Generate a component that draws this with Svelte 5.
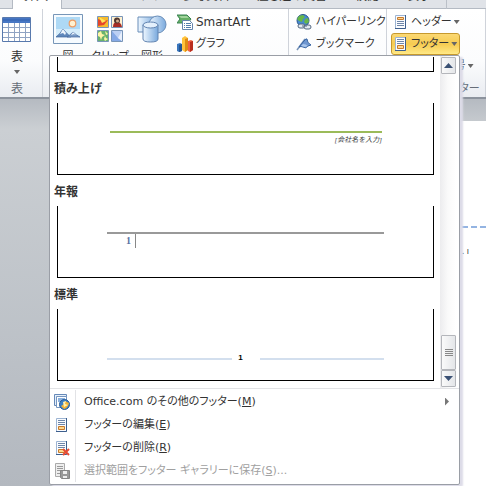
<script lang="ts">
  const tabs = ['挿入', 'ページ レイアウト', '参考資料', '差し込み文書', '校閲', '表示'];
  const actions = [
    { icon: 'office', label: 'Office.com のその他のフッター', key: 'M', tail: '', more: true, disabled: false },
    { icon: 'edit', label: 'フッターの編集', key: 'E', tail: '', more: false, disabled: false },
    { icon: 'remove', label: 'フッターの削除', key: 'R', tail: '', more: false, disabled: false },
    { icon: 'save', label: '選択範囲をフッター ギャラリーに保存', key: 'S', tail: '...', more: false, disabled: true }
  ];
</script>

{#snippet page(kind: string)}
  <svg class="ico" viewBox="0 0 16 16" aria-hidden="true">
    <path d="M2.500 1.500h10v13h-10z" fill="#fafcff" stroke="#9db4d2" />
    <path d="M12.500 1v13.500H2" fill="none" stroke="#3d5f8d" />
    {#if kind === 'header'}
      <path d="M4.500 3.500h6v2h-6z" fill="#ffd88c" stroke="#c67a2e" />
      <path d="M4 7.500h7M4 9.500h7M4 11.500h7" stroke="#6e86a8" />
    {:else}
      <path d="M4 3.500h7M4 5.500h7M4 7.500h7" stroke="#6e86a8" />
      <path d="M4.500 9.500h6v3h-6z" fill="#ffd88c" stroke="#c67a2e" />
    {/if}
  </svg>
{/snippet}

<div class="app">
  <nav class="tabs">
    {#each tabs as tab, i}
      <button class="tab t{i}" class:active={i === 0}>{tab}</button>
    {/each}
  </nav>

  <div class="ribbon">
    <section class="group table-group">
      <button class="big">
        <svg width="30" height="26" viewBox="0 0 30 26" aria-hidden="true">
          <path d="M.5.5h28v24H.5z" fill="#fff" stroke="#5879ad" />
          <path d="M1 1h27v5H1z" fill="#4777c4" />
          <path d="M1 3h27" stroke="#3563ae" />
          <path d="M1 10.500h27M1 15.500h27M1 20.500h27M6.500 6v18M12.500 6v18M17.500 6v18M23.500 6v18" stroke="#8fa3c3" />
        </svg>
        <span>表</span>
        <i class="arrow"></i>
      </button>
      <div class="caption">表</div>
    </section>

    <section class="group figure-group">
      <button class="pic">
        <svg width="30" height="30" viewBox="0 0 30 30" aria-hidden="true">
          <path d="M.5.5h29v29H.5z" fill="#f6fbff" stroke="#7796b8" />
          <path d="M3 3h24v20H3z" fill="#aed9f5" />
          <path d="M3 15h24v8H3z" fill="#d5edfb" />
          <circle cx="19.500" cy="9.500" r="3.300" fill="#fff1d0" stroke="#ef9c62" stroke-width="1.200" />
          <path d="M3 23q4-3 7-8 4 5 8 8z" fill="#5f87bb" stroke="#42699f" stroke-width=".7" />
          <path d="M14 23q3-2 6-5 3 3 7 5z" fill="#7799c5" stroke="#42699f" stroke-width=".7" />
          <path d="M10 15l-3 5 3-1 2 2 1-2zM20 18l-2 3 3-1 2 1z" fill="#edf5fd" />
        </svg>
        <span>図</span>
      </button>
      <button class="pic">
        <svg width="28" height="30" viewBox="0 0 28 30" aria-hidden="true">
          <path d="M1.500 2.500h11v11h-11z" fill="#f7bb2d" stroke="#7895b8" />
          <path d="M2 5q5 3 10 1l-4 5-6 1z" fill="#e5462b" /><path d="M3 3l7 4-4 2z" fill="#ffe55d" />
          <path d="M15.500 2.500h11v11h-11z" fill="#fff0cf" stroke="#7895b8" />
          <path d="M17 13q0-5 4-5t5 5z" fill="#a72c24" /><circle cx="21" cy="6.500" r="3" fill="#51372e" /><circle cx="21.500" cy="7" r="1.500" fill="#d5ad8d" />
          <path d="M1.500 16.500h11v11h-11z" fill="#68b36d" stroke="#7895b8" />
          <path d="M2 19l3-2 1 3 3 1-3 2-1 3-1-3-2-1zM9 17l2 2 1 1-2 1zM9 22l1 2 2 1-3 2-1-2z" fill="#fff4a6" />
          <path d="M15.500 16.500h11v11h-11z" fill="#bcd0f3" stroke="#7895b8" />
          <path d="M16 17l6 7 4 3H16z" fill="#85a9e6" /><path d="M26 17l-4 7 4 3z" fill="#e8effc" />
        </svg>
        <span>クリップ</span>
      </button>
      <button class="pic">
        <svg width="30" height="30" viewBox="0 0 30 30" aria-hidden="true">
          <defs><linearGradient id="blue"><stop stop-color="#eef7ff" /><stop offset="1" stop-color="#79a9dd" /></linearGradient></defs>
          <path d="M1 3h18v15H1z" fill="url(#blue)" stroke="#698db8" />
          <circle cx="20.500" cy="10.500" r="8.500" fill="url(#blue)" stroke="#698db8" />
          <path d="M6 11v14q0 3 7.500 3t7.500-3V11" fill="url(#blue)" stroke="#6284b1" />
          <ellipse cx="13.500" cy="11" rx="7.500" ry="3" fill="#e4f0fc" stroke="#6284b1" />
        </svg>
        <span>図形</span>
      </button>
      <div class="stack">
        <button class="cmd latin">
          <svg class="ico" viewBox="0 0 16 16" aria-hidden="true">
            <path d="M0 1h10l4 4-3 4H0l3-4z" fill="#65ae65" stroke="#3b8452" /><path d="M2 2h8l2 2H4z" fill="#a0d39a" />
            <path d="M5.500 6.500h7l3 3v6h-10z" fill="#fff" stroke="#6585ad" /><path d="M7 9.500h1m1 0h5M7 11.500h1m1 0h5M7 13.500h1m1 0h5" stroke="#527cac" />
          </svg>SmartArt
        </button>
        <button class="cmd">
          <svg class="ico" viewBox="0 0 16 16" aria-hidden="true">
            <path d="M0 8l3-1 2 1v7l-3 1-2-1z" fill="#3976bd" /><path d="M2 9l3-1v7l-3 1z" fill="#235493" />
            <path d="M5 2l3-2 3 2v12l-3 2-3-2z" fill="#ffc33c" /><path d="M8 3l3-1v12l-3 2z" fill="#df8c14" />
            <path d="M11 5l3-1 2 1v9l-3 2-2-1z" fill="#f06140" /><path d="M13 6l3-1v9l-3 2z" fill="#b92d1f" />
          </svg>グラフ
        </button>
      </div>
    </section>

    <section class="group link-group">
      <button class="cmd">
        <svg class="ico" viewBox="0 0 16 16" aria-hidden="true">
          <circle cx="7" cy="6.500" r="6" fill="#4589cf" stroke="#28558b" />
          <path d="M3 2l4-1 2 2-2 2-1 3-3-1-2-2zM9 5l3-1 1 4-3 2-2-2z" fill="#67b748" />
          <rect x="2" y="10" width="7" height="4" rx="2" fill="#e3eaf2" stroke="#52677f" /><rect x="8" y="11" width="7" height="4" rx="2" fill="#e3eaf2" stroke="#52677f" /><path d="M6 12h5" stroke="#52677f" />
        </svg>ハイパーリンク
      </button>
      <button class="cmd">
        <svg class="ico" viewBox="0 0 16 16" aria-hidden="true">
          <path d="M1 14L9 3" stroke="#7894b9" stroke-width="1.500" />
          <path d="M8 5q2-3 3-2 0 4 4 6l-3 1q-2 3-5 1-2-1-4 0z" fill="#6f97d0" stroke="#3562a0" />
          <path d="M7 8q3 0 5 2l-3 1-4-1z" fill="#a9c6ec" />
        </svg>ブックマーク
      </button>
    </section>

    <section class="group hf-group">
      <button class="cmd">{@render page('header')}ヘッダー<i class="arrow"></i></button>
      <button class="cmd selected">{@render page('footer')}フッター<i class="arrow"></i></button>
      <button class="cmd">{@render page('header')}ページ番号<i class="arrow"></i></button>
      <div class="caption">ヘッダーとフッター</div>
    </section>
  </div>

  <main class="workspace">
    <div class="paper">
      <div class="margin-line"></div>
      <span class="mark">. ı</span>
    </div>
  </main>

  <div class="menu">
    <div class="gallery">
      <div class="list">
        <div class="card partial"></div>
        <h2>積み上げ</h2>
        <div class="card stacked"><hr /><em>[会社名を入力]</em></div>
        <h2>年報</h2>
        <div class="card annual"><hr /><span>1</span></div>
        <h2>標準</h2>
        <div class="card standard"><hr /><b>1</b><hr /></div>
      </div>
      <div class="scroll">
        <button class="step" aria-label="上へ"><svg width="9" height="5" viewBox="0 0 9 5"><path d="M0 5l4.500-5L9 5z" fill="#3b5174" /></svg></button>
        <div class="track"></div>
        <div class="thumb"></div>
        <button class="step" aria-label="下へ"><svg width="9" height="5" viewBox="0 0 9 5"><path d="M0 0l4.500 5L9 0z" fill="#3b5174" /></svg></button>
      </div>
    </div>
    <div class="actions">
      {#each actions as a}
        <button class="action" disabled={a.disabled}>
          <span class="slot">
            {#if a.icon === 'office'}
              <svg class="ico" viewBox="0 0 16 16" aria-hidden="true">
                <path d="M.5.5h12v11H.5z" fill="#e6f0fb" stroke="#6689b8" /><path d="M2.500 2.500h10v11h-10z" fill="#fff" stroke="#7595bf" /><path d="M4 4h7v4H4z" fill="#8bb1de" />
                <circle cx="10.500" cy="10.500" r="5" fill="#3c7fc5" stroke="#285d9a" /><path d="M7 12q3-1 4-5l4 2q-1 5-5 6z" fill="#f5b332" /><path d="M9 8l3-1-1 3 3 1-4 2z" fill="#fff2b3" />
              </svg>
            {:else if a.icon === 'save'}
              <svg class="ico" viewBox="0 0 16 16" aria-hidden="true">
                <path d="M1.500.5h9v13h-9z" fill="#eee" stroke="#aaa" /><path d="M3 3.500h6M3 5.500h6M3 7.500h4M3 10.500h3" stroke="#999" />
                <path d="M6.500 7.500h9v8h-8l-1-1z" fill="#999" stroke="#858585" /><path d="M9 8h4v3H9zM9 13h4v2H9z" fill="#eee" />
              </svg>
            {:else}
              <span class="doc">
                {@render page('footer')}
                {#if a.icon === 'remove'}
                  <svg class="cross" width="8" height="8" viewBox="0 0 8 8" aria-hidden="true"><path d="M1 1l6 6M7 1L1 7" stroke="#e84b33" stroke-width="2" /></svg>
                {/if}
              </span>
            {/if}
          </span>
          <span class="text">{a.label}(<u>{a.key}</u>){a.tail}</span>
          {#if a.more}<i class="more"></i>{/if}
        </button>
      {/each}
    </div>
  </div>
</div>

<style>
  :global(body) { margin: 0; }
  .app {
    position: relative;
    height: 100vh;
    min-height: 486px;
    display: flex;
    flex-direction: column;
    overflow: hidden;
    font: 12px/16px "DejaVu Sans", "Noto Sans CJK JP", sans-serif;
    font-feature-settings: "palt";
    color: #333;
    background: #c6cacf;
  }
  .app * { box-sizing: border-box; }
  button {
    font: inherit;
    font-feature-settings: inherit;
    color: inherit;
    padding: 0;
    border: 0;
    background: none;
    white-space: nowrap;
  }
  svg { display: block; flex: none; }
  .ico { width: 16px; height: 16px; }
  .arrow {
    width: 6px;
    height: 4px;
    flex: none;
    background: #666;
    clip-path: polygon(0 0, 100% 0, 50% 100%);
  }

  .tabs {
    display: flex;
    flex: none;
    height: 9px;
    padding-left: 12px;
    background: #e0e3e8;
    border-bottom: 1px solid #b4bac3;
  }
  .tab { height: 9px; line-height: 16px; display: flex; align-items: flex-end; padding-bottom: 5px; }
  .tab.active { width: 50px; padding-left: 11px; background: #fff; border: solid #b4bac3; border-width: 0 1px; }
  .t1 { width: 120px; padding-left: 18px; }
  .t2 { width: 75px; }
  .t3 { width: 98px; }
  .t4 { width: 52px; }
  .t5 { width: 40px; border-right: 1px solid #bbc0c8; }

  .ribbon {
    display: flex;
    flex: none;
    height: 90px;
    background: linear-gradient(#fff, #fbfcfd 60%, #e9ecf1);
    border-bottom: 2px solid #8c939d;
  }
  .group { border-right: 1px solid #cfd3da; }
  .caption { font-size: 12px; color: #666d78; text-align: center; }
  .table-group { width: 43px; padding-right: 8px; }
  .big { width: 100%; height: 72px; display: flex; flex-direction: column; align-items: center; padding-top: 8px; }
  .big span { margin: 6px 0 5px; }
  .figure-group { flex: 1; display: flex; padding: 5px 0 0 10px; }
  .pic { width: 30px; margin-right: 12px; display: flex; flex-direction: column; align-items: center; align-self: flex-start; gap: 5px; font-size: 11px; }
  .stack { display: flex; flex-direction: column; margin: -3px 0 0 -2px; }
  .cmd { height: 22px; display: flex; align-items: center; gap: 4px; font-size: 11px; }
  .latin { font-size: 12px; }
  .stack .cmd { gap: 3px; }
  .link-group { width: 98px; padding: 2px 0 0 7px; }
  .hf-group { width: 99px; padding: 2px 0 0 4px; }
  .hf-group .cmd { gap: 2px; padding: 0 0 0 1px; border: 1px solid transparent; }
  .hf-group .selected {
    width: 69px;
    border-color: #c6992e;
    border-radius: 3px;
    background: linear-gradient(#fbd873, #f6cb51 50%, #ffe986);
  }
  .hf-group .caption { font-size: 11px; text-align: right; padding-right: 12px; margin-top: 4px; white-space: nowrap; }

  .workspace {
    flex: 1;
    padding: 22px 0 0 81px;
    background: linear-gradient(#b5bac1, #cbcfd3 30px, #bcc1c7 250px, #b3b8bf);
  }
  .paper { height: 100%; background: #fff; padding-top: 105px; text-align: right; }
  .margin-line { height: 2px; background: repeating-linear-gradient(to left, #94b4e2 0 6px, transparent 6px 9px); }
  .mark { display: block; padding: 16px 17px 0 0; font-size: 8px; }

  .menu {
    position: absolute;
    top: 55px;
    left: 49px;
    right: 26px;
    background: #fff;
    border: 1px solid #9a9ea6;
    border-radius: 2px;
    box-shadow: 3px 2px 2px #dddce8;
  }
  .gallery { display: flex; height: 333px; padding: 0 2px 0 4px; border-bottom: 1px solid #e2e3e6; }
  .list { flex: 1; padding: 1px 6px 0 0; }
  h2 { margin: 0; height: 31px; font: bold 12px/31px "Noto Sans CJK JP", sans-serif; font-feature-settings: "palt"; }
  .card { height: 72px; margin-left: 3px; border: solid #000; border-width: 0 1px 1px; display: flex; }
  .partial { height: 15px; }
  hr { margin: 0; border: 0; height: 2px; }
  .stacked { flex-direction: column; padding: 28px 51px 0 52px; }
  .stacked hr { background: #9bbb59; }
  .stacked em { align-self: flex-end; font: italic 7px/14px "Liberation Serif", "Noto Sans CJK JP", serif; }
  .annual { flex-direction: column; padding: 26px 49px 0; }
  .annual hr { background: #999; }
  .annual span { width: 29px; height: 14px; padding-right: 4px; text-align: right; color: #5971a3; font: bold 10px/14px "Liberation Serif", serif; border-right: 1px solid #888; }
  .standard { align-items: flex-start; padding: 49px 49px 0; }
  .standard hr { flex: 1; background: #d3dfee; }
  .standard b { width: 28px; height: 12px; margin-top: -6px; padding-right: 10px; text-align: center; font: bold 8px/12px "Liberation Sans", sans-serif; color: #000; }

  .scroll { width: 17px; display: flex; flex-direction: column; background: linear-gradient(to right, #ececee, #fafafa 8px, #fff); padding: 1px; }
  .step, .thumb { flex: none; width: 15px; border: 1px solid #b4b6bb; border-radius: 1px; background: linear-gradient(to right, #fafafa, #e4e6e9); }
  .step { height: 17px; display: flex; align-items: center; justify-content: center; }
  .track { flex: 1; }
  .thumb { height: 35px; display: flex; align-items: center; justify-content: center; }
  .thumb::before { content: ""; width: 8px; height: 7px; background: repeating-linear-gradient(#888 0 1px, transparent 1px 2px); }

  .actions { padding: 1px 4px 2px; }
  .action { width: 100%; height: 23px; display: flex; align-items: center; font-size: 11px; }
  .slot { width: 22px; height: 23px; display: flex; align-items: center; border-right: 1px solid #e2e3e6; }
  .doc { position: relative; }
  .cross { position: absolute; right: 0; bottom: 0; }
  .text { flex: 1; padding-left: 8px; text-align: left; }
  .action:disabled { color: #a0a0a0; }
  .more { width: 4px; height: 8px; margin-right: 6px; background: #777; clip-path: polygon(0 0, 100% 50%, 0 100%); }
</style>
